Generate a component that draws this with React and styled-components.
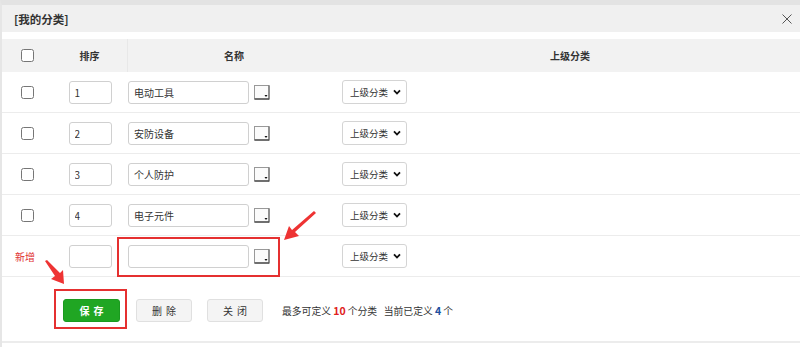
import React from "react";
import styled, { createGlobalStyle } from "styled-components";

const Global = createGlobalStyle`
  html, body { margin: 0; padding: 0; background: #fff; }
  body { font-family: "Noto Sans CJK SC", "Noto Sans", sans-serif; font-size: 10px; color: #333; }
  * { box-sizing: border-box; }
`;

const Dialog = styled.div`
  position: relative;
  width: 800px;
  height: 347px;
  border-top: 5px solid #e3e3e3;
  border-left: 2px solid #e6e6e6;
  overflow: hidden;
  background: #fff;
`;

const TitleBar = styled.div`
  height: 27px;
  background: #f0f0f0;
  display: flex;
  align-items: center;
  justify-content: space-between;
  padding: 0 7px 0 12px;
`;

const Title = styled.div`
  font-size: 11.5px;
  font-weight: bold;
  color: #333;
`;

const CloseBtn = styled.button`
  border: 0;
  background: none;
  padding: 0;
  width: 12px;
  height: 12px;
  display: flex;
  align-items: center;
  justify-content: center;
  cursor: pointer;
`;

const Table = styled.div`
  margin-top: 7px;
`;

const cols = "50px 76px 212px 1fr";

const HeadRow = styled.div`
  display: grid;
  grid-template-columns: ${cols};
  height: 33px;
  background: #f2f2f2;
`;

const HeadCell = styled.div`
  display: flex;
  align-items: center;
  justify-content: center;
  font-weight: bold;
  font-size: 10px;
  color: #333;
  border-right: ${(p) => (p.$divider ? "1px solid #e8e8e8" : "none")};
`;

const Row = styled.div`
  display: grid;
  grid-template-columns: ${cols};
  height: 41px;
  border-bottom: 1px solid #ececec;
  align-items: center;
`;

const Cell = styled.div`
  display: flex;
  align-items: center;
  justify-content: ${(p) => p.$justify || "flex-start"};
  gap: 5px;
`;

const Check = styled.input.attrs({ type: "checkbox" })`
  width: 13px;
  height: 13px;
  margin: 0;
`;

const NewLabel = styled.span`
  color: #e03030;
  font-size: 10px;
  margin-left: -4px;
`;

const TextInput = styled.input`
  width: ${(p) => p.$w}px;
  height: 23px;
  border: 1px solid #d0d0d0;
  border-radius: 3px;
  padding: 0 5px;
  font-family: inherit;
  font-size: 10px;
  color: #333;
  outline: none;
  background: #fff;
`;

const SelectBox = styled.div`
  width: 65px;
  height: 24px;
  margin-left: 2px;
  border: 1px solid #d4d4d4;
  border-radius: 3px;
  display: flex;
  align-items: center;
  justify-content: space-between;
  padding: 0 5px 0 7px;
  font-size: 9.5px;
  color: #333;
  white-space: nowrap;
  background: #fff;
`;

const Footer = styled.div`
  height: 66px;
  border-bottom: 2px solid #ececec;
  display: flex;
  align-items: flex-start;
  padding: 22px 0 0 61px;
`;

const Btn = styled.button`
  width: ${(p) => p.$w || 56}px;
  height: 23px;
  margin-right: ${(p) => p.$mr || 0}px;
  border-radius: 3px;
  font-family: inherit;
  font-size: 10px;
  letter-spacing: 4px;
  text-indent: 4px;
  cursor: pointer;
  border: 1px solid ${(p) => (p.$primary ? "#1a9a1f" : "#e0e0e0")};
  background: ${(p) => (p.$primary ? "#20a623" : "#f4f4f4")};
  color: ${(p) => (p.$primary ? "#fff" : "#333")};
  font-weight: ${(p) => (p.$primary ? "bold" : "normal")};
  padding: 0;
`;

const Info = styled.div`
  height: 23px;
  display: flex;
  align-items: center;
  font-size: 9.8px;
  color: #333;
  white-space: pre;
`;

const Num = styled.b`
  color: ${(p) => p.$c};
  font-weight: bold;
  font-size: 10.5px;
`;

const Overlay = styled.svg`
  position: absolute;
  left: -2px;
  top: -5px;
  width: 800px;
  height: 347px;
  pointer-events: none;
`;

const ColorPick = () => (
  <svg width="16" height="15" viewBox="0 0 16 15">
    <rect x="0.5" y="0.5" width="14.5" height="13.5" fill="#fbfbfb" stroke="#999" />
    <line x1="0.5" y1="14" x2="15" y2="14" stroke="#333" strokeWidth="1.2" />
    <line x1="15" y1="0.5" x2="15" y2="14.5" stroke="#555" />
    <polygon points="10.5,10 13.5,10 12,12" fill="#111" />
  </svg>
);

const Chevron = () => (
  <svg width="8" height="6" viewBox="0 0 8 6">
    <polyline points="1,1.3 4,4.5 7,1.3" fill="none" stroke="#111" strokeWidth="1.8" />
  </svg>
);

const rows = [
  { id: 1, order: "1", name: "电动工具" },
  { id: 2, order: "2", name: "安防设备" },
  { id: 3, order: "3", name: "个人防护" },
  { id: 4, order: "4", name: "电子元件" },
];

const ParentSelect = () => (
  <SelectBox>
    <span>上级分类</span>
    <Chevron />
  </SelectBox>
);

export default function App() {
  return (
    <>
      <Global />
      <Dialog>
        <TitleBar>
          <Title>[我的分类]</Title>
          <CloseBtn aria-label="关闭">
            <svg width="10" height="10" viewBox="0 0 10 10">
              <path d="M0.5 0.5 L9.5 9.5 M9.5 0.5 L0.5 9.5" stroke="#555" strokeWidth="1" />
            </svg>
          </CloseBtn>
        </TitleBar>
        <Table>
          <HeadRow>
            <HeadCell>
              <Check />
            </HeadCell>
            <HeadCell $divider>排序</HeadCell>
            <HeadCell>名称</HeadCell>
            <HeadCell>上级分类</HeadCell>
          </HeadRow>
          {rows.map((r) => (
            <Row key={r.id}>
              <Cell $justify="center">
                <Check />
              </Cell>
              <Cell $justify="center">
                <TextInput $w={43} defaultValue={r.order} />
              </Cell>
              <Cell>
                <TextInput $w={121} defaultValue={r.name} />
                <ColorPick />
              </Cell>
              <Cell>
                <ParentSelect />
              </Cell>
            </Row>
          ))}
          <Row>
            <Cell $justify="center">
              <NewLabel>新增</NewLabel>
            </Cell>
            <Cell $justify="center">
              <TextInput $w={43} defaultValue="" />
            </Cell>
            <Cell>
              <TextInput $w={121} defaultValue="" />
              <ColorPick />
            </Cell>
            <Cell>
              <ParentSelect />
            </Cell>
          </Row>
        </Table>
        <Footer>
          <Btn $primary $w={57} $mr={16}>保存</Btn>
          <Btn $w={56} $mr={15}>删除</Btn>
          <Btn $w={56} $mr={19}>关闭</Btn>
          <Info>
            {"最多可定义 "}
            <Num $c="#e02020">10</Num>
            {" 个分类   当前已定义 "}
            <Num $c="#2050a0">4</Num>
            {" 个"}
          </Info>
        </Footer>
        <Overlay viewBox="0 0 800 347">
          <rect x="118" y="238" width="161" height="38" fill="none" stroke="#e53030" strokeWidth="2" />
          <rect x="55" y="290" width="71" height="38" fill="none" stroke="#e53030" strokeWidth="2" />
          <polygon points="316,213 295,232 299,236 284,240 289,226 292,230 314,211" fill="#ee3333" />
          <polygon points="45,261 47,260 60,273 63,270 64,284 51,279 55,276" fill="#ee3333" />
        </Overlay>
      </Dialog>
    </>
  );
}
